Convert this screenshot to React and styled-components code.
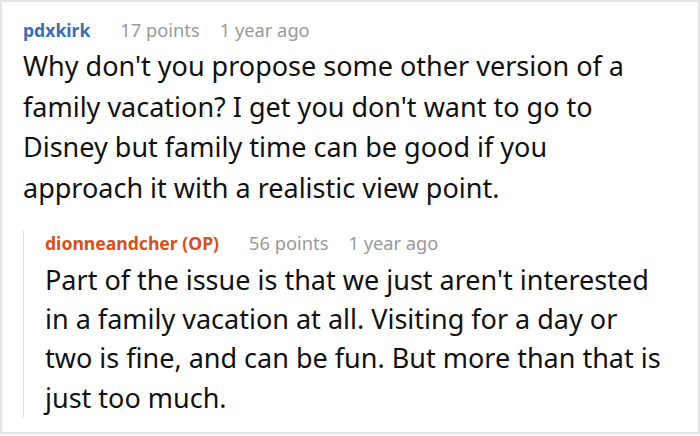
import styled, { createGlobalStyle } from "styled-components"

const Global = createGlobalStyle`
    body {
        margin: 0;
        background: #fff;
        font-family: "Noto Sans", "Open Sans", sans-serif;
    }
`

const Card = styled.div`
    box-sizing: border-box;
    width: 700px;
    height: 434px;
    border: 2px solid #e4e4e4;
    padding: 16px 29px 0 21px;
`

const Meta = styled.div`
    display: flex;
    align-items: baseline;
    font-size: 18.3px;
    line-height: 24px;
    color: #999;
`

const Author = styled.span`
    font-size: 17.6px;
    font-weight: bold;
    color: ${props => props.$op ? "#d6501c" : "#3a6db8"};
    margin-right: 30px;
`

const Points = styled.span`
    margin-right: 20px;
`

const Body = styled.p`
    margin: ${props => props.$reply ? "5px" : "4px"} 0 0;
    font-size: 27px;
    line-height: ${props => props.$reply ? "39.3px" : "40.7px"};
    color: #111;
`

const Reply = styled.div`
    margin-top: 22px;
    border-left: 1px solid #dcdcdc;
    padding-left: 21px;
`

const Comment = ({ author, op, points, age, reply, children }) => (
    <>
        <Meta>
            <Author $op={op}>{author}</Author>
            <Points>{points} points</Points>
            <span>{age}</span>
        </Meta>
        <Body $reply={reply}>{children}</Body>
    </>
)

const App = () => {
    return (
        <Card>
            <Global />
            <Comment author="pdxkirk" points={17} age="1 year ago">
                Why don't you propose some other version of a family vacation? I get you don't want to go to Disney but family time can be good if you approach it with a realistic view point.
            </Comment>
            <Reply>
                <Comment author="dionneandcher (OP)" op reply points={56} age="1 year ago">
                    Part of the issue is that we just aren't interested in a family vacation at all. Visiting for a day or two is fine, and can be fun. But more than that is just too much.
                </Comment>
            </Reply>
        </Card>
    )
}

export default App
